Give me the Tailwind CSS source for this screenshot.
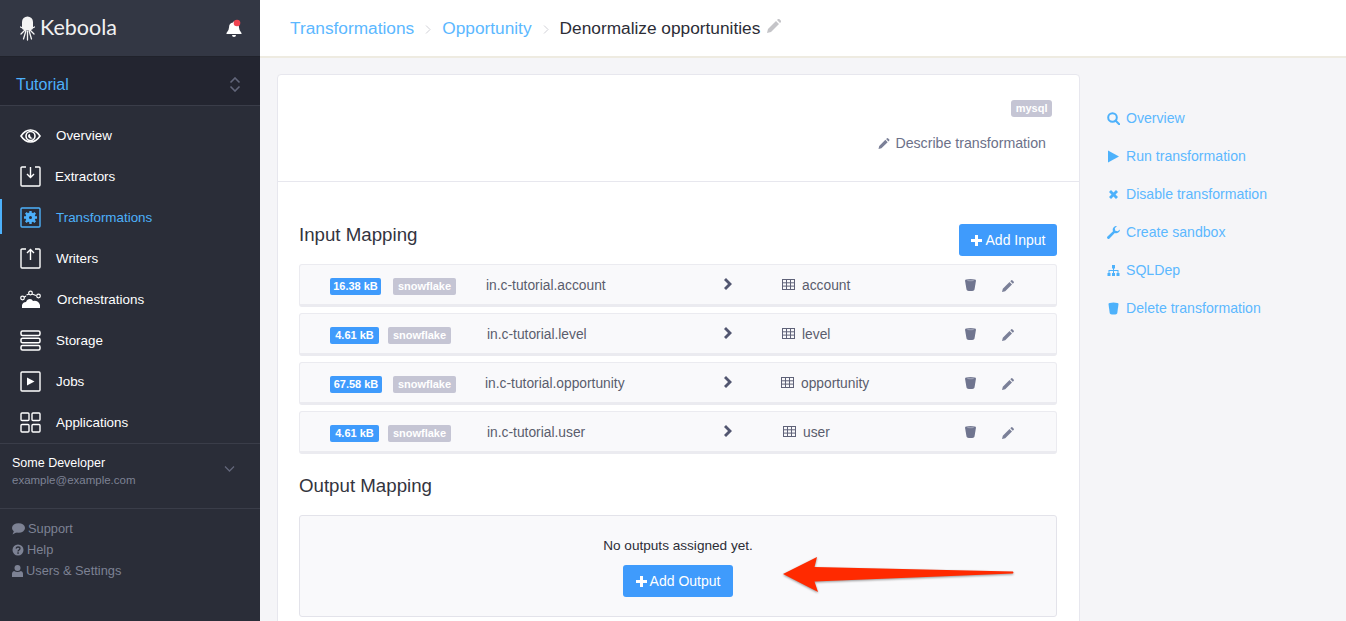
<!DOCTYPE html>
<html lang="en">
<head>
    <meta charset="UTF-8">
    <meta name="viewport" content="width=device-width, initial-scale=1.0">
    <title>Denormalize opportunities</title>
    <script src="https://cdn.jsdelivr.net/npm/@tailwindcss/browser@4"></script>
</head>
<body class="bg-[#f5f5f8] font-['Liberation_Sans',Arial,sans-serif]">
<div class="relative flex h-[621px] w-[1346px] overflow-hidden">

    <!-- Sidebar -->
    <aside class="flex w-[260px] shrink-0 flex-col bg-[#2a2d38] text-white">
        <div class="flex h-[56px] items-center justify-between bg-[#333744] pl-[20px] pr-[17px]">
            <div class="flex items-center gap-[5px]">
                <svg class="h-[25px] w-[15px]" viewBox="0 0 15 25" fill="#f4f4f4">
                    <path d="M2 6a5.500 5.500 0 0 1 11 0v5.500q0 2-2 2.500H4q-2-.5-2-2.500z"/>
                    <path d="M5 14 1 18M6 14.500 3.500 23M7.500 15v9M9 14.500 11.500 23M10 14l4 4M2.500 12 .5 11M12.500 12l2-1" stroke="#f4f4f4" stroke-width="1.300" fill="none" stroke-linecap="round"/>
                </svg>
                <span class="font-['Lato',sans-serif] text-[21.5px] leading-none text-[#f1f1f2]">Keboola</span>
            </div>
            <svg class="h-[18px] w-[17px]" viewBox="0 0 17 18">
                <path d="M8 2.500a1 1 0 0 1 1 1q4 .5 4 5 0 3 2.500 5.500v1h-15v-1Q3 11.500 3 8.500q0-4.500 4-5a1 1 0 0 1 1-1zM6 16h4a2 2 0 0 1-4 0z" fill="#fff"/>
                <circle cx="11" cy="4" r="3.300" fill="#ef4350"/>
            </svg>
        </div>
        <div class="flex h-[49px] items-center justify-between border-t border-[#20222b] bg-[#232530] pl-[16px] pr-[19px] pt-[7px]">
            <span class="text-[16px] text-[#4db1fb]">Tutorial</span>
            <svg class="h-[15px] w-[12px]" viewBox="0 0 12 15" fill="none" stroke="#62667a" stroke-width="1.600">
                <path d="M1.500 5.500 6 1l4.500 4.500M1.500 9.500 6 14l4.500-4.500"/>
            </svg>
        </div>
        <nav class="border-t border-[#3a3d49] pt-[9px] text-[13.4px]">
            <a class="flex h-[41px] items-center pl-[20px]">
                <svg class="mr-[15px] h-[16px] w-[21px]" viewBox="0 0 21 16" fill="none" stroke="#fff" stroke-width="1.600">
                    <path d="M1 8q4-6 9.500-6T20 8q-4 6-9.500 6T1 8z"/><circle cx="10.500" cy="8" r="4.500"/><path d="M8 8a3 3 0 0 0 5 2q-3 0-3-4-2 0-2 2z" fill="#fff" stroke="none"/>
                </svg><span class="mt-[2px]">Overview</span></a>
            <a class="flex h-[41px] items-center pl-[20px]">
                <svg class="mr-[14px] h-[21px] w-[21px]" viewBox="0 0 21 21" fill="none" stroke="#fff" stroke-width="1.400">
                    <path d="M6 1H2a1 1 0 0 0-1 1v17a1 1 0 0 0 1 1h17a1 1 0 0 0 1-1V2a1 1 0 0 0-1-1h-4"/><path d="M10.500 1v10M7 8l3.500 3.500L14 8"/>
                </svg><span class="mt-[2px]">Extractors</span></a>
            <a class="relative flex h-[41px] items-center pl-[20px] text-[#4db1fb]">
                <span class="absolute left-0 top-[2px] h-[35px] w-[2px] bg-[#4db1fb]"></span>
                <svg class="mr-[15px] h-[21px] w-[21px]" viewBox="0 0 21 21" fill="none" stroke="#4db1fb" stroke-width="1.400">
                    <rect x="1" y="1" width="19" height="19" rx="1"/><circle cx="10.500" cy="10.500" r="3.200" stroke-width="3.400"/><path d="M10.500 4v3M10.500 14v3M4 10.500h3M14 10.500h3M5.800 5.800l2 2M13.200 13.200l2 2M15.200 5.800l-2 2M7.800 13.200l-2 2" stroke-width="2.400"/>
                </svg><span class="mt-[2px]">Transformations</span></a>
            <a class="flex h-[41px] items-center pl-[20px]">
                <svg class="mr-[15px] h-[21px] w-[21px]" viewBox="0 0 21 21" fill="none" stroke="#fff" stroke-width="1.400">
                    <path d="M6 1H2a1 1 0 0 0-1 1v17a1 1 0 0 0 1 1h17a1 1 0 0 0 1-1V2a1 1 0 0 0-1-1h-4"/><path d="M10.500 12V2M7 5l3.500-3.500L14 5"/>
                </svg><span class="mt-[2px]">Writers</span></a>
            <a class="flex h-[41px] items-center pl-[20px]">
                <svg class="mr-[16px] h-[19px] w-[21px]" viewBox="0 0 21 19">
                    <path d="M2 18v-3q1-3 4-3 1-3 4-3 2 0 3 2 5-1 7 4v3z" fill="#fff"/>
                    <path d="M3 8l3-2M9 4 6.500 5M12 4l4 1.500" stroke="#fff" stroke-width="1.200"/>
                    <circle cx="2.500" cy="8" r="1.800" fill="#2a2d38" stroke="#fff" stroke-width="1.200"/><circle cx="10.500" cy="3" r="1.800" fill="#2a2d38" stroke="#fff" stroke-width="1.200"/><circle cx="18.500" cy="6" r="1.800" fill="#2a2d38" stroke="#fff" stroke-width="1.200"/>
                </svg><span class="mt-[2px]">Orchestrations</span></a>
            <a class="flex h-[41px] items-center pl-[20px]">
                <svg class="mr-[15px] h-[21px] w-[21px]" viewBox="0 0 21 21" fill="none" stroke="#fff" stroke-width="1.500">
                    <rect x="1" y="1" width="19" height="4.500" rx="1.500"/><rect x="1" y="8.200" width="19" height="4.500" rx="1.500"/><rect x="1" y="15.400" width="19" height="4.500" rx="1.500"/>
                </svg><span class="mt-[2px]">Storage</span></a>
            <a class="flex h-[41px] items-center pl-[20px]">
                <svg class="mr-[15px] h-[21px] w-[21px]" viewBox="0 0 21 21">
                    <rect x="1" y="1" width="19" height="19" rx="1" fill="none" stroke="#fff" stroke-width="1.400"/><path d="M7 6.500v8l7.500-4z" fill="#fff"/>
                </svg><span class="mt-[2px]">Jobs</span></a>
            <a class="flex h-[41px] items-center pl-[20px]">
                <svg class="mr-[15px] h-[21px] w-[21px]" viewBox="0 0 21 21" fill="none" stroke="#fff" stroke-width="1.400">
                    <rect x="1" y="1" width="8" height="7.500" rx="1"/><rect x="12" y="1" width="8" height="7.500" rx="1"/><rect x="1" y="12.500" width="8" height="7.500" rx="1"/><rect x="12" y="12.500" width="8" height="7.500" rx="1"/>
                </svg><span class="mt-[2px]">Applications</span></a>
        </nav>
        <div class="flex h-[66px] items-start justify-between border-y border-[#3a3d49] pl-[12px] pr-[25px] pt-[11px]">
            <div>
                <div class="text-[12.5px] leading-[17px]">Some Developer</div>
                <div class="text-[11.5px] leading-[17px] text-[#7d8294]">example@example.com</div>
            </div>
            <svg class="mt-[11px] h-[6px] w-[11px]" viewBox="0 0 11 6" fill="none" stroke="#62667a" stroke-width="1.300"><path d="M1 .5l4.500 4.500L10 .5"/></svg>
        </div>
        <div class="pl-[12px] pt-[9px] text-[12.8px] leading-[21px] text-[#7d8294]">
            <a class="flex items-center gap-[3px]">
                <svg class="h-[12px] w-[13px]" viewBox="0 0 13 12" fill="#7d8294"><ellipse cx="6.500" cy="5" rx="6.500" ry="4.800"/><path d="M2 8 .5 11.500 5 9z"/></svg>Support</a>
            <a class="flex items-center gap-[3px]">
                <svg class="h-[12px] w-[12px]" viewBox="0 0 12 12"><circle cx="6" cy="6" r="5.500" fill="#7d8294"/><path d="M4 4.500Q4.500 3 6 3q2 0 2 1.600C8 6 6 6 6 7.500" fill="none" stroke="#2a2d38" stroke-width="1.300"/><rect x="5.300" y="8.300" width="1.500" height="1.500" fill="#2a2d38"/></svg>Help</a>
            <a class="flex items-center gap-[3px]">
                <svg class="h-[12px] w-[11px]" viewBox="0 0 11 12" fill="#7d8294"><circle cx="5.500" cy="3" r="3"/><path d="M0 12V8.500Q0 6.500 2 6q3.500 2 7 0 2 .5 2 2.500V12z"/></svg>Users &amp; Settings</a>
        </div>
    </aside>

    <!-- Main -->
    <main class="flex min-w-0 flex-1 flex-col">
        <header class="flex h-[58px] shrink-0 items-center border-b-2 border-[#eeebe1] bg-white pl-[30px] pt-[2px] text-[17.3px]">
            <a class="text-[#5cb8ff]">Transformations</a>
            <svg class="mx-[11px] h-[9px] w-[6px]" viewBox="0 0 6 9" fill="none" stroke="#d0d0d6" stroke-width="1"><path d="M1 .5l4 4-4 4"/></svg>
            <a class="text-[#5cb8ff]">Opportunity</a>
            <svg class="mx-[11px] h-[9px] w-[6px]" viewBox="0 0 6 9" fill="none" stroke="#d0d0d6" stroke-width="1"><path d="M1 .5l4 4-4 4"/></svg>
            <span class="text-[#2c2d36]">Denormalize opportunities</span>
            <svg class="mb-[6px] ml-[7px] h-[14px] w-[14px]" viewBox="0 0 14 14" fill="#c4c4c8"><path d="M0 14l1-4 8-8 3 3-8 8zM10 1l1-1q.7-.3 1.200 0l1.800 1.800q.3.500 0 1.200l-1 1z"/></svg>
        </header>

        <div class="flex flex-1 items-start overflow-hidden pl-[17px] pt-[16px]">
            <!-- Card -->
            <section class="h-[600px] w-[803px] shrink-0 rounded-[4px] border border-[#e7e7ee] bg-white">
                <div class="flex h-[107px] flex-col items-end border-b border-[#e7e7ee] pr-[27px] pt-[25px]">
                    <span class="flex h-[17px] items-center rounded-[3px] bg-[#c5c5d4] px-[4.500px] text-[11px] font-bold text-white">mysql</span>
                    <a class="mr-[6px] mt-[16px] flex items-center gap-[5px] text-[14.200px] text-[#6c7189]">
                        <svg class="h-[11px] w-[12px]" viewBox="0 0 12 12" fill="#7b8098"><path d="M0 12l.8-3.200L7.500 2l2.500 2.500L3.200 11.200zM8.300 1.200 9.300.2q.5-.3 1 0l1.500 1.500q.3.500 0 1L10.800 3.700z"/></svg>
                        Describe transformation</a>
                </div>

                <div class="pl-[21px] pr-[22px]">
                    <div class="flex items-start justify-between pt-[42px]">
                        <h2 class="text-[18.700px] leading-[22px] text-[#33343e]">Input Mapping</h2>
                        <button class="flex h-[32px] w-[98px] items-center justify-center gap-[4px] rounded-[3px] bg-[#3f9bfc] text-[14px] text-white">
                            <svg class="h-[11px] w-[11px]" viewBox="0 0 11 11" fill="#fff"><path d="M4 0h3v4h4v3H7v4H4V7H0V4h4z"/></svg>Add Input</button>
                    </div>

                    <div class="mt-[8px] flex flex-col gap-[6px]">
                        <div class="flex h-[43px] items-center rounded-[3px] border border-[#ebebf0] border-b-[3px] bg-[#f9f9fb] pl-[30px] text-[13.800px] text-[#5a5d6d]">
                            <div class="mt-[4px] flex w-[156px] items-center gap-[12px]">
                                <span class="flex h-[17px] w-[51px] shrink-0 items-center justify-center rounded-[2px] bg-[#3f9bfc] text-[11px] font-bold text-white">16.38 kB</span>
                                <span class="flex h-[17px] w-[63px] shrink-0 items-center justify-center rounded-[2px] bg-[#c5c5d4] text-[11px] font-bold text-white">snowflake</span>
                            </div>
                            <span class="mt-[4px] w-[238px]">in.c-tutorial.account</span>
                            <svg class="mb-[2px] mr-[49px] h-[12px] w-[9px]" viewBox="0 0 9 12" fill="#525670"><path d="M2 0l6 6-6 6-2-2 4-4-4-4z"/></svg>
                            <svg class="mr-[7px] h-[11px] w-[13px]" viewBox="0 0 13 11" fill="none" stroke="#5f6278"><rect x=".5" y=".5" width="12" height="10"/><path d="M.5 3.800h12M.5 7.100h12M4.500 .5v10M8.500 .5v10"/></svg>
                            <span class="mt-[4px] w-[163px]">account</span>
                            <svg class="mr-[26px] h-[12px] w-[11px]" viewBox="0 0 11 12" fill="#70758f"><path d="M0 1.500Q0 0 5.500 0T11 1.500L9.500 10.500Q9 12 5.500 12T1.500 10.500z"/><ellipse cx="5.500" cy="1.500" rx="3.500" ry=".7" fill="#9a9eb2"/></svg>
                            <svg class="mt-[2px] h-[12px] w-[12px]" viewBox="0 0 12 12" fill="#7b8098"><path d="M0 12l.8-3.200L7.500 2l2.500 2.500L3.200 11.200zM8.300 1.200 9.300.2q.5-.3 1 0l1.500 1.500q.3.500 0 1L10.800 3.700z"/></svg>
                        </div>
                        <div class="flex h-[43px] items-center rounded-[3px] border border-[#ebebf0] border-b-[3px] bg-[#f9f9fb] pl-[30px] text-[13.800px] text-[#5a5d6d]">
                            <div class="mt-[4px] flex w-[157px] items-center gap-[9px]">
                                <span class="flex h-[17px] w-[49px] shrink-0 items-center justify-center rounded-[2px] bg-[#3f9bfc] text-[11px] font-bold text-white">4.61 kB</span>
                                <span class="flex h-[17px] w-[63px] shrink-0 items-center justify-center rounded-[2px] bg-[#c5c5d4] text-[11px] font-bold text-white">snowflake</span>
                            </div>
                            <span class="mt-[4px] w-[237px]">in.c-tutorial.level</span>
                            <svg class="mb-[2px] mr-[49px] h-[12px] w-[9px]" viewBox="0 0 9 12" fill="#525670"><path d="M2 0l6 6-6 6-2-2 4-4-4-4z"/></svg>
                            <svg class="mr-[7px] h-[11px] w-[13px]" viewBox="0 0 13 11" fill="none" stroke="#5f6278"><rect x=".5" y=".5" width="12" height="10"/><path d="M.5 3.800h12M.5 7.100h12M4.500 .5v10M8.500 .5v10"/></svg>
                            <span class="mt-[4px] w-[163px]">level</span>
                            <svg class="mr-[26px] h-[12px] w-[11px]" viewBox="0 0 11 12" fill="#70758f"><path d="M0 1.500Q0 0 5.500 0T11 1.500L9.500 10.500Q9 12 5.500 12T1.500 10.500z"/><ellipse cx="5.500" cy="1.500" rx="3.500" ry=".7" fill="#9a9eb2"/></svg>
                            <svg class="mt-[2px] h-[12px] w-[12px]" viewBox="0 0 12 12" fill="#7b8098"><path d="M0 12l.8-3.200L7.500 2l2.500 2.500L3.200 11.200zM8.300 1.200 9.300.2q.5-.3 1 0l1.500 1.500q.3.500 0 1L10.800 3.700z"/></svg>
                        </div>
                        <div class="flex h-[43px] items-center rounded-[3px] border border-[#ebebf0] border-b-[3px] bg-[#f9f9fb] pl-[30px] text-[13.800px] text-[#5a5d6d]">
                            <div class="mt-[4px] flex w-[155px] items-center gap-[11px]">
                                <span class="flex h-[17px] w-[52px] shrink-0 items-center justify-center rounded-[2px] bg-[#3f9bfc] text-[11px] font-bold text-white">67.58 kB</span>
                                <span class="flex h-[17px] w-[63px] shrink-0 items-center justify-center rounded-[2px] bg-[#c5c5d4] text-[11px] font-bold text-white">snowflake</span>
                            </div>
                            <span class="mt-[4px] w-[239px]">in.c-tutorial.opportunity</span>
                            <svg class="mb-[2px] mr-[48px] h-[12px] w-[9px]" viewBox="0 0 9 12" fill="#525670"><path d="M2 0l6 6-6 6-2-2 4-4-4-4z"/></svg>
                            <svg class="mr-[7px] h-[11px] w-[13px]" viewBox="0 0 13 11" fill="none" stroke="#5f6278"><rect x=".5" y=".5" width="12" height="10"/><path d="M.5 3.800h12M.5 7.100h12M4.500 .5v10M8.500 .5v10"/></svg>
                            <span class="mt-[4px] w-[164px]">opportunity</span>
                            <svg class="mr-[26px] h-[12px] w-[11px]" viewBox="0 0 11 12" fill="#70758f"><path d="M0 1.500Q0 0 5.500 0T11 1.500L9.500 10.500Q9 12 5.500 12T1.500 10.500z"/><ellipse cx="5.500" cy="1.500" rx="3.500" ry=".7" fill="#9a9eb2"/></svg>
                            <svg class="mt-[2px] h-[12px] w-[12px]" viewBox="0 0 12 12" fill="#7b8098"><path d="M0 12l.8-3.200L7.500 2l2.500 2.500L3.200 11.200zM8.300 1.200 9.300.2q.5-.3 1 0l1.500 1.500q.3.500 0 1L10.800 3.700z"/></svg>
                        </div>
                        <div class="flex h-[43px] items-center rounded-[3px] border border-[#ebebf0] border-b-[3px] bg-[#f9f9fb] pl-[30px] text-[13.800px] text-[#5a5d6d]">
                            <div class="mt-[4px] flex w-[157px] items-center gap-[9px]">
                                <span class="flex h-[17px] w-[49px] shrink-0 items-center justify-center rounded-[2px] bg-[#3f9bfc] text-[11px] font-bold text-white">4.61 kB</span>
                                <span class="flex h-[17px] w-[63px] shrink-0 items-center justify-center rounded-[2px] bg-[#c5c5d4] text-[11px] font-bold text-white">snowflake</span>
                            </div>
                            <span class="mt-[4px] w-[237px]">in.c-tutorial.user</span>
                            <svg class="mb-[2px] mr-[50px] h-[12px] w-[9px]" viewBox="0 0 9 12" fill="#525670"><path d="M2 0l6 6-6 6-2-2 4-4-4-4z"/></svg>
                            <svg class="mr-[7px] h-[11px] w-[13px]" viewBox="0 0 13 11" fill="none" stroke="#5f6278"><rect x=".5" y=".5" width="12" height="10"/><path d="M.5 3.800h12M.5 7.100h12M4.500 .5v10M8.500 .5v10"/></svg>
                            <span class="mt-[4px] w-[162px]">user</span>
                            <svg class="mr-[26px] h-[12px] w-[11px]" viewBox="0 0 11 12" fill="#70758f"><path d="M0 1.500Q0 0 5.500 0T11 1.500L9.500 10.500Q9 12 5.500 12T1.500 10.500z"/><ellipse cx="5.500" cy="1.500" rx="3.500" ry=".7" fill="#9a9eb2"/></svg>
                            <svg class="mt-[2px] h-[12px] w-[12px]" viewBox="0 0 12 12" fill="#7b8098"><path d="M0 12l.8-3.200L7.500 2l2.500 2.500L3.200 11.200zM8.300 1.200 9.300.2q.5-.3 1 0l1.500 1.500q.3.500 0 1L10.800 3.700z"/></svg>
                        </div>
                    </div>

                    <h2 class="mt-[21px] text-[18.700px] leading-[22px] text-[#33343e]">Output Mapping</h2>
                    <div class="mt-[18px] flex h-[102px] flex-col items-center rounded-[3px] border border-[#e3e3ea] bg-[#f9f9fb] pt-[22px]">
                        <p class="text-[13.600px] leading-[16px] text-[#2c2d36]">No outputs assigned yet.</p>
                        <button class="mt-[11px] flex h-[32px] w-[110px] items-center justify-center gap-[3px] rounded-[3px] bg-[#3f9bfc] text-[14px] text-white">
                            <svg class="h-[11px] w-[11px]" viewBox="0 0 11 11" fill="#fff"><path d="M4 0h3v4h4v3H7v4H4V7H0V4h4z"/></svg>Add Output</button>
                    </div>
                </div>
            </section>

            <!-- Side actions -->
            <ul class="ml-[27px] flex flex-col pt-[26px] text-[14.100px] text-[#5cb8ff]">
                <li class="flex h-[38px] items-center gap-[6px]">
                    <svg class="mb-[2px] h-[13px] w-[13px]" viewBox="0 0 13 13" fill="none" stroke="#4db1fb" stroke-width="2"><circle cx="5.500" cy="5.500" r="4.300"/><path d="M8.500 8.500l3.700 3.700" stroke-linecap="round"/></svg>Overview</li>
                <li class="flex h-[38px] items-center gap-[6px]">
                    <svg class="mb-[2px] h-[13px] w-[13px]" viewBox="0 0 13 13" fill="#4db1fb"><path d="M1 .5v12l11-6z"/></svg>Run transformation</li>
                <li class="flex h-[38px] items-center gap-[6px]">
                    <svg class="mb-[2px] h-[13px] w-[13px]" viewBox="0 0 13 13" fill="#4db1fb"><path d="M4 2l2.500 2.500L9 2l2 2-2.500 2.500L11 9l-2 2-2.500-2.500L4 11 2 9l2.500-2.500L2 4z"/></svg>Disable transformation</li>
                <li class="flex h-[38px] items-center gap-[6px]">
                    <svg class="mb-[2px] h-[13px] w-[13px]" viewBox="0 0 13 13" fill="#4db1fb"><path d="M13 3.500a3.800 3.800 0 0 1-5.200 3.500L2.500 12.500q-1 1-2 0t0-2L6 5.200A3.800 3.800 0 0 1 10 0L7.800 2.300l.5 2.400 2.400.5z"/></svg>Create sandbox</li>
                <li class="flex h-[38px] items-center gap-[6px]">
                    <svg class="mb-[2px] h-[13px] w-[13px]" viewBox="0 0 13 13" fill="#4db1fb"><path d="M5 1h3v3.500H7v1.500h4.500v3H12.500v3h-3v-3h1V7H7v2h1v3H5V9h1V7H2.500v2h1v3h-3V9h1V6H6V4.500H5z"/></svg>SQLDep</li>
                <li class="flex h-[38px] items-center gap-[6px]">
                    <svg class="mb-[2px] h-[13px] w-[13px]" viewBox="0 0 13 13" fill="#4db1fb"><path d="M1.500 2Q1.500 .5 6.500 .5T11.500 2L10.300 11Q10 12.500 6.500 12.500T2.700 11z"/></svg>Delete transformation</li>
            </ul>
        </div>
    </main>

    <!-- Annotation arrow over the page -->
    <svg class="absolute left-[775px] top-[550px] h-[50px] w-[245px] drop-shadow-[0_1px_1px_rgba(0,0,0,0.4)]" viewBox="0 0 245 50">
        <path d="M8 24 42 7l-2.500 10L238 21.500q1 1.500 0 2L39.500 31.500 43 42z" fill="#ff2a00"/>
    </svg>
</div>
</body>
</html>
